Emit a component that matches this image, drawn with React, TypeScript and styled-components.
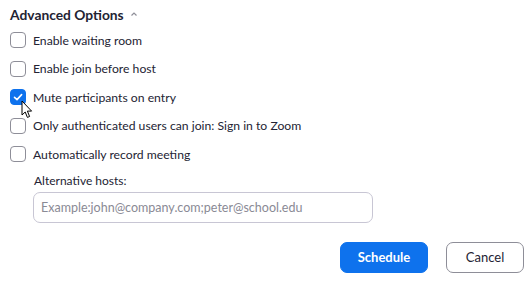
import React from "react";
import styled, { createGlobalStyle } from "styled-components";

const Global = createGlobalStyle`
  html, body { margin: 0; padding: 0; background: #fff; }
  body { font-family: Lato, "Open Sans", sans-serif; color: #232333; }
  * { box-sizing: border-box; }
`;

const Page = styled.div`
  width: 529px;
  height: 281px;
  position: relative;
  padding: 4px 0 0 10px;
  display: flex;
  flex-direction: column;
`;

const Header = styled.div`
  display: flex;
  align-items: center;
  gap: 6px;
  height: 20px;
  font-size: 13.8px;
  font-weight: 700;
  color: #232333;
`;

const List = styled.div`
  display: flex;
  flex-direction: column;
  margin-top: 2px;
`;

const Row = styled.label`
  display: flex;
  align-items: center;
  gap: 7px;
  height: 28.5px;
  font-size: 12.2px;
  color: #232333;
`;

const Box = styled.span<{ $checked?: boolean }>`
  width: 16px;
  height: 16px;
  border-radius: 4px;
  border: 1px solid ${(p) => (p.$checked ? "#0e72ed" : "#8e8e98")};
  background: ${(p) => (p.$checked ? "#0e72ed" : "#fff")};
  display: flex;
  align-items: center;
  justify-content: center;
  flex: none;
`;

const Hosts = styled.div`
  margin: 4px 0 0 23px;
  display: flex;
  flex-direction: column;
  gap: 4px;
`;

const HostsLabel = styled.div`
  font-size: 12px;
  padding-left: 1px;
  color: #232333;
`;

const Input = styled.input`
  width: 340px;
  height: 31px;
  border: 1px solid #c8c6d4;
  border-radius: 7px;
  padding: 0 7px;
  font-family: inherit;
  font-size: 12.5px;
  outline: none;
  &::placeholder { color: #8a8a95; }
`;

const Actions = styled.div`
  display: flex;
  justify-content: flex-end;
  gap: 18px;
  margin-top: 19px;
  padding-right: 5px;
`;

const Button = styled.button<{ $primary?: boolean }>`
  height: 31px;
  width: ${(p) => (p.$primary ? "88px" : "78px")};
  border-radius: 7px;
  font-family: inherit;
  font-size: 13px;
  font-weight: ${(p) => (p.$primary ? 700 : 400)};
  color: ${(p) => (p.$primary ? "#fff" : "#232333")};
  background: ${(p) => (p.$primary ? "#0e72ed" : "#fff")};
  border: 1px solid ${(p) => (p.$primary ? "#0e72ed" : "#8e8e98")};
`;

const Cursor = styled.svg`
  position: absolute;
  left: 21px;
  top: 100px;
`;

const items = [
  { label: "Enable waiting room", checked: false },
  { label: "Enable join before host", checked: false },
  { label: "Mute participants on entry", checked: true },
  { label: "Only authenticated users can join: Sign in to Zoom", checked: false },
  { label: "Automatically record meeting", checked: false },
];

export default function App() {
  return (
    <>
      <Global />
      <Page>
        <Header>
          Advanced Options
          <svg width="8" height="6" viewBox="0 0 8 6">
            <path d="M1.5 4.5 L4 2 L6.5 4.5" fill="none" stroke="#8e8e98" strokeWidth="1.2" />
          </svg>
        </Header>
        <List>
          {items.map((it) => (
            <Row key={it.label}>
              <Box $checked={it.checked}>
                {it.checked && (
                  <svg width="12" height="12" viewBox="0 0 12 12">
                    <path d="M2.5 6.3 L5 8.6 L9.6 3.6" fill="none" stroke="#fff" strokeWidth="1.6" strokeLinecap="round" strokeLinejoin="round" />
                  </svg>
                )}
              </Box>
              {it.label}
            </Row>
          ))}
        </List>
        <Hosts>
          <HostsLabel>Alternative hosts:</HostsLabel>
          <Input placeholder="Example:john@company.com;peter@school.edu" />
        </Hosts>
        <Actions>
          <Button $primary>Schedule</Button>
          <Button>Cancel</Button>
        </Actions>
        <Cursor width="12" height="20" viewBox="0 0 12 20">
          <path d="M1 1 L1 15 L4.2 12 L6.4 17.4 L8.6 16.5 L6.4 11.1 L10.6 11.1 Z" fill="#fff" stroke="#000" strokeWidth="1" strokeLinejoin="round" />
        </Cursor>
      </Page>
    </>
  );
}
